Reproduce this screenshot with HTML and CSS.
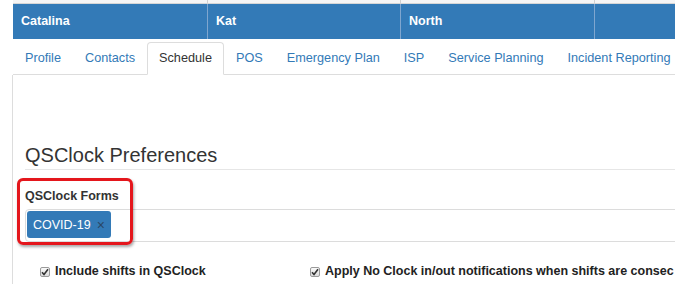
FILE: index.html
```html
<!DOCTYPE html>
<html>
<head>
<meta charset="utf-8">
<link rel="stylesheet" href="styles.css">
</head>
<body>
<div class="page">
  <div class="grid">
    <div class="top-row"><div class="cell"></div><div class="cell"></div><div class="cell"></div><div class="cell"></div></div>
    <div class="blue-row"><div class="cell">Catalina</div><div class="cell">Kat</div><div class="cell">North</div><div class="cell"></div></div>
  </div>
  <ul class="tabs">
    <li><a>Profile</a></li>
    <li><a>Contacts</a></li>
    <li class="active"><a>Schedule</a></li>
    <li><a>POS</a></li>
    <li><a>Emergency Plan</a></li>
    <li><a>ISP</a></li>
    <li><a>Service Planning</a></li>
    <li><a>Incident Reporting</a></li>
  </ul>
  <div class="panel">
    <h2 class="heading">QSClock Preferences</h2>
    <div class="form-group">
      <label class="label">QSClock Forms</label>
      <div class="select">
        <span class="tag">COVID-19<span class="tag-x">×</span></span>
      </div>
      <div class="highlight"></div>
    </div>
    <div class="checks">
      <div class="check"><span class="box"><svg width="8" height="8" viewBox="0 0 8 8"><path d="M1 4.2 L3 6.5 L7 1.2" fill="none" stroke="#333" stroke-width="1.6"/></svg></span>Include shifts in QSClock</div>
      <div class="check"><span class="box"><svg width="8" height="8" viewBox="0 0 8 8"><path d="M1 4.2 L3 6.5 L7 1.2" fill="none" stroke="#333" stroke-width="1.6"/></svg></span>Apply No Clock in/out notifications when shifts are consec</div>
    </div>
  </div>
</div>
</body>
</html>
```
FILE: styles.css
```css
html, body {
  margin: 0;
  padding: 0;
  background: #fff;
  overflow: hidden;
}
body {
  width: 675px;
  height: 284px;
  font-family: "Liberation Sans", Arial, Helvetica, sans-serif;
  color: #333;
}
.page {
  padding-left: 12px;
  width: 700px;
}
.grid {
  margin-left: 1px;
}
.top-row, .blue-row {
  display: grid;
  grid-template-columns: 194px 193px 194px 1fr;
}
.cell {
  padding: 0 8px;
  white-space: nowrap;
}
.top-row .cell {
  height: 3px;
  background: #f5f5f5;
  border-left: 1px solid #d0d0d0;
  border-bottom: 1px solid #d6d6d6;
}
.top-row .cell:first-child {
  border-left: none;
}
.blue-row .cell {
  height: 35px;
  line-height: 35px;
  background: #337ab7;
  color: #fff;
  font-weight: bold;
  font-size: 12.5px;
  border-left: 1px solid #7fa6cf;
}
.blue-row .cell:first-child {
  border-left: none;
}
.tabs {
  list-style: none;
  margin: 3px 0 0 1px;
  padding: 0;
  display: flex;
  border-bottom: 1px solid #ddd;
  white-space: nowrap;
}
.tabs li {
  margin-bottom: -1px;
}
.tabs a {
  display: block;
  padding: 7px 11px;
  line-height: 17px;
  font-size: 12.7px;
  color: #337ab7;
  border: 1px solid transparent;
  border-radius: 4px 4px 0 0;
}
.tabs .active a {
  color: #333;
  background: #fff;
  border-color: #ddd;
  border-bottom-color: #fff;
}
.panel {
  border-left: 1px solid #ddd;
  padding: 0 0 10px 12px;
}
.heading {
  margin: 0;
  padding: 69px 0 3px;
  font-size: 20px;
  line-height: 22px;
  font-weight: normal;
  color: #333;
  border-bottom: 1px solid #e6e6e6;
}
.form-group {
  position: relative;
  padding-top: 19px;
}
.label {
  display: block;
  font-size: 12.5px;
  font-weight: bold;
  line-height: 15px;
  color: #333;
  margin-bottom: 5px;
}
.select {
  height: 29px;
  border: 1px solid #dcdcdc;
  border-radius: 4px 0 0 4px;
  padding: 1px;
  display: flex;
}
.tag {
  display: flex;
  align-items: center;
  height: 27px;
  padding: 0 6px;
  background: #337ab7;
  color: #fff;
  font-size: 12.5px;
  border-radius: 3px;
  box-sizing: border-box;
}
.tag-x {
  color: #2a4766;
  font-size: 14px;
  margin-left: 6px;
}
.highlight {
  position: absolute;
  left: -8px;
  top: 8px;
  width: 110px;
  height: 61px;
  border: 3px solid #e4161c;
  border-radius: 6px;
  box-shadow: 1px 2px 3px rgba(0, 0, 0, 0.35);
}
.checks {
  display: grid;
  grid-template-columns: 270px 1fr;
  padding: 22px 0 0 15px;
  white-space: nowrap;
  overflow: hidden;
}
.check {
  display: flex;
  align-items: center;
  font-size: 12.5px;
  font-weight: bold;
  line-height: 15px;
  color: #222;
  overflow: hidden;
}
.box {
  flex: none;
  width: 10px;
  height: 10px;
  border: 1px solid #9a9a9a;
  border-radius: 2px;
  background: linear-gradient(#fafafa, #dcdcdc);
  margin-right: 5px;
  display: flex;
  align-items: center;
  justify-content: center;
  box-sizing: border-box;
}
```
